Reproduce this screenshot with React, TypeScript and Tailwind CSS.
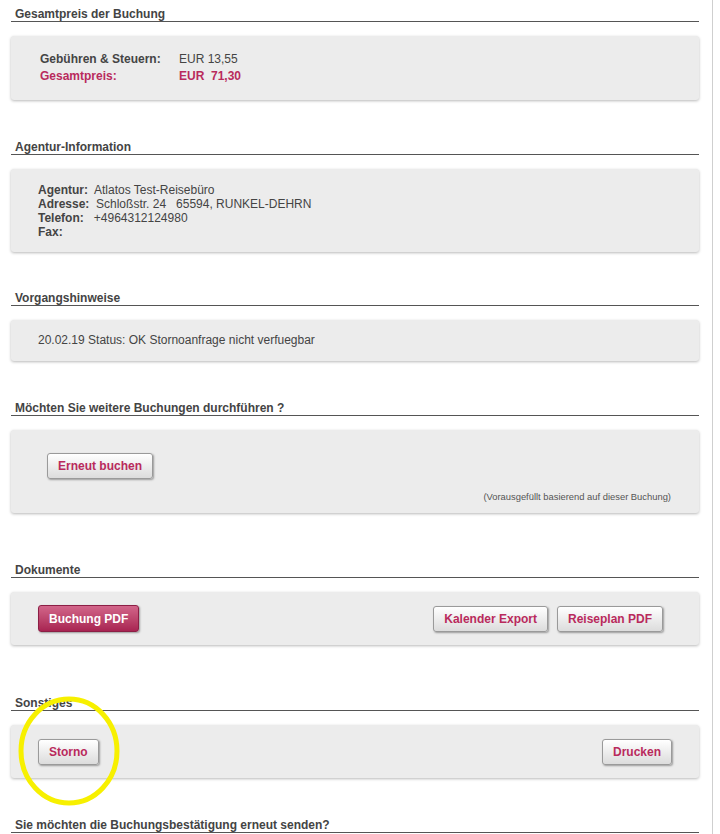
import clsx from 'clsx';

const pink = 'text-[#b92a5c]';

function Heading({ children, className }: { children: React.ReactNode; className?: string }) {
  return (
    <div
      className={clsx(
        'border-b border-[#555] pl-[4px] text-[12px] font-bold leading-[14px] text-[#444]',
        className,
      )}
    >
      {children}
    </div>
  );
}

function Card({ children, className }: { children: React.ReactNode; className?: string }) {
  return (
    <div
      className={clsx(
        'mt-[14px] rounded-[3px] bg-[#ececec] shadow-[0_1px_3px_rgba(0,0,0,0.28)]',
        className,
      )}
    >
      {children}
    </div>
  );
}

function Btn({ children, primary }: { children: React.ReactNode; primary?: boolean }) {
  return (
    <button
      className={clsx(
        'h-[26px] rounded-[3px] border px-[10px] text-[12px] font-bold leading-[14px] shadow-[1px_1px_2px_rgba(0,0,0,0.35)]',
        primary
          ? 'h-[27px] border-[#8c1f45] bg-gradient-to-b from-[#d2658a] to-[#a82352] text-white'
          : clsx('border-[#9a9a9a] bg-gradient-to-b from-white to-[#dcdcdc]', pink),
      )}
    >
      {children}
    </button>
  );
}

export default function App() {
  return (
    <div className="relative h-[834px] w-[720px] overflow-hidden bg-white font-['Liberation_Sans',Arial,sans-serif]">
      <div className="h-full w-[713px] border-r border-[#cfcfcf] pl-[11px] pr-[13px] pt-[7px]">
        <Heading>Gesamtpreis der Buchung</Heading>
        <Card className="h-[64px] pl-[29px] pt-[15px] text-[12px] leading-[17px]">
          <div className="flex">
            <span className="w-[139px] font-bold text-[#444]">Gebühren &amp; Steuern:</span>
            <span className="text-[#444]">EUR 13,55</span>
          </div>
          <div className={clsx('flex', pink)}>
            <span className="w-[139px] font-bold">Gesamtpreis:</span>
            <span className="whitespace-pre font-bold">EUR  71,30</span>
          </div>
        </Card>

        <Heading className="mt-[40px]">Agentur-Information</Heading>
        <Card className="h-[83px] whitespace-pre pl-[27px] pt-[14px] text-[12px] leading-[14px] text-[#444]">
          <div>
            <b>Agentur:</b>  Atlatos Test-Reisebüro
          </div>
          <div>
            <b>Adresse:</b>  Schloßstr. 24   65594, RUNKEL-DEHRN
          </div>
          <div>
            <b>Telefon:</b>   +4964312124980
          </div>
          <div>
            <b>Fax:</b>
          </div>
        </Card>

        <Heading className="mt-[39px]">Vorgangshinweise</Heading>
        <Card className="h-[41px] pl-[27px] pt-[13px] text-[12px] leading-[14px] text-[#444]">
          20.02.19 Status: OK Stornoanfrage nicht verfuegbar
        </Card>

        <Heading className="mt-[40px]">Möchten Sie weitere Buchungen durchführen ?</Heading>
        <Card className="flex h-[83px] flex-col pl-[36px] pr-[28px] pt-[23px]">
          <div>
            <Btn>Erneut buchen</Btn>
          </div>
          <div className="mt-[12px] text-right text-[9.4px] leading-[12px] text-[#555]">
            (Vorausgefüllt basierend auf dieser Buchung)
          </div>
        </Card>

        <Heading className="mt-[50px]">Dokumente</Heading>
        <Card className="flex h-[53px] items-center justify-between pl-[27px] pr-[36px]">
          <Btn primary>Buchung PDF</Btn>
          <div className="flex gap-[9px]">
            <Btn>Kalender Export</Btn>
            <Btn>Reiseplan PDF</Btn>
          </div>
        </Card>

        <Heading className="mt-[51px]">Sonstiges</Heading>
        <Card className="flex h-[53px] items-center justify-between pl-[27px] pr-[27px]">
          <Btn>Storno</Btn>
          <Btn>Drucken</Btn>
        </Card>

        <Heading className="mt-[40px]">Sie möchten die Buchungsbestätigung erneut senden?</Heading>
      </div>

      <svg className="pointer-events-none absolute left-0 top-0" width="720" height="834">
        <ellipse cx="69" cy="751" rx="48" ry="52" fill="none" stroke="#f7f000" strokeWidth="5" />
      </svg>
    </div>
  );
}
